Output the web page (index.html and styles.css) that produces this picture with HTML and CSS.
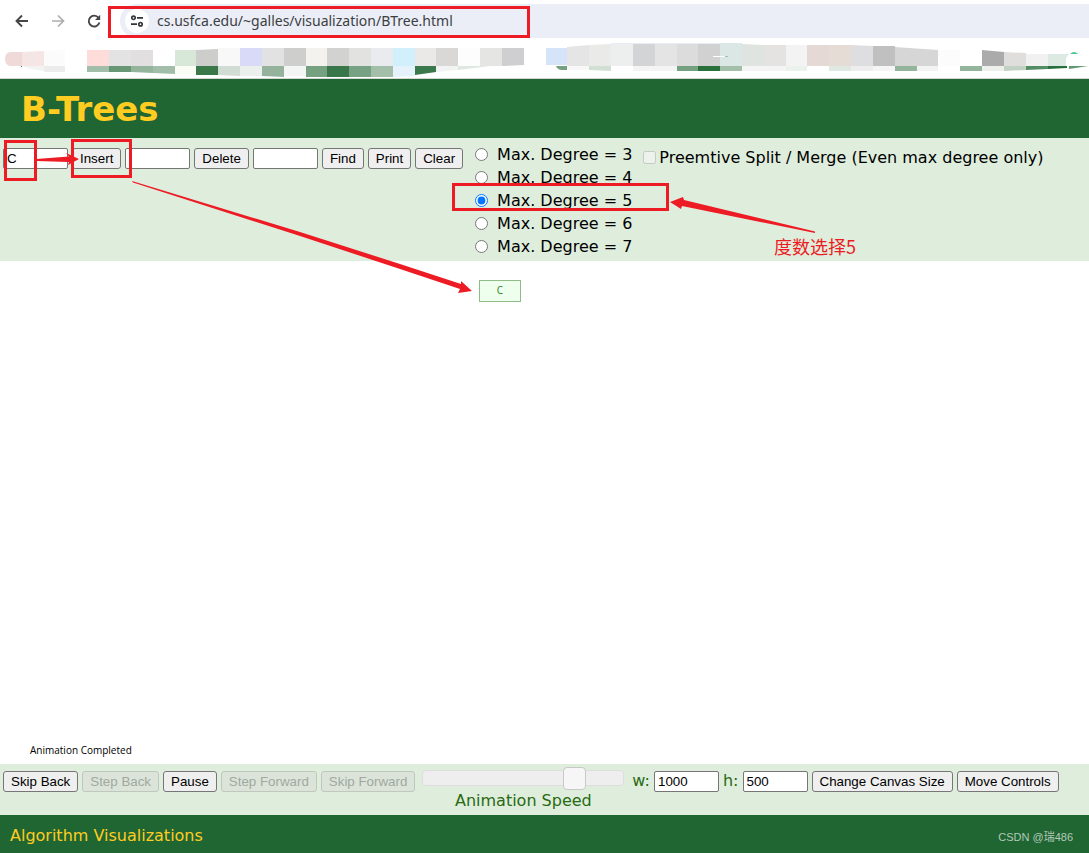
FILE: index.html
```html
<!DOCTYPE html>
<html lang="en">
<head>
<meta charset="utf-8">
<title>B-Tree Visualization</title>
<link rel="stylesheet" href="styles.css">
</head>
<body>
<div class="toolbar">
  <button class="nav-button" type="button" aria-label="Back"><svg width="16" height="16" viewBox="0 0 16 16"><path d="M14 8H3M8 2.500L2.500 8L8 13.500" fill="none" stroke="#444648" stroke-width="1.900"/></svg></button>
  <button class="nav-button" type="button" aria-label="Forward" disabled><svg width="16" height="16" viewBox="0 0 16 16"><path d="M2 8H13M8 2.500L13.500 8L8 13.500" fill="none" stroke="#adadad" stroke-width="1.700"/></svg></button>
  <button class="nav-button" type="button" aria-label="Reload"><svg width="16" height="16" viewBox="0 0 16 16"><path d="M12.500 4.800A5.400 5.400 0 1 0 13.400 9.500" fill="none" stroke="#444648" stroke-width="1.900"/><path d="M14.200 1.800V7H9z" fill="#444648"/></svg></button>
  <div class="address">
    <span class="site-info"><svg width="14" height="14" viewBox="0 0 14 14" fill="none" stroke="#333537" stroke-width="1.700"><circle cx="3.500" cy="3.800" r="1.700"/><path d="M7 3.800H13M1 10.200H7"/><circle cx="10.500" cy="10.200" r="1.700"/></svg></span>
    <input class="url" type="text" aria-label="Address" value="cs.usfca.edu/~galles/visualization/BTree.html">
  </div>
</div>
<div class="bookmarks">
  <svg class="mosaic" width="1089" height="40" viewBox="0 38 1089 40" aria-hidden="true">
    <path d="M22 52H11Q5 52 5 59T11 66H22z" fill="#f0d9d9"/>
    <path d="M22 52L44 51V66H22z" fill="#f5e5e5"/>
    <path d="M44 51L65 50V66H44z" fill="#fbfbfb"/>
    <path d="M22 66H44V71L30 69z" fill="#f3f3f3"/><path d="M44 66H65V72H44z" fill="#ececec"/>
    <path d="M21 66h1v1h-1z" fill="#4e8560"/>
    <path d="M87 50h22v16H87z" fill="#fddcda"/><path d="M109 50h22v16h-22z" fill="#e3e3e3"/><path d="M131 50h22v16h-22z" fill="#e1dfe0"/>
    <path d="M175 50h21v16h-21z" fill="#d7e8d8"/><path d="M196 50L218 49V66H196z" fill="#cdcdcc"/>
    <path d="M218 48h22v18h-22z" fill="#f8f8f8"/><path d="M240 48h22v18h-22z" fill="#d9daf7"/><path d="M262 48h22v18h-22z" fill="#e2e2e2"/><path d="M284 48h22v18h-22z" fill="#cececd"/><path d="M306 48h21v18h-21z" fill="#f3f2ef"/><path d="M327 48h22v18h-22z" fill="#d2d2d1"/><path d="M349 48h22v18h-22z" fill="#e2e2e0"/><path d="M371 48h22v18h-22z" fill="#e9ebee"/><path d="M393 48h22v18h-22z" fill="#d2effc"/><path d="M415 48h21v18h-21z" fill="#ebe9e7"/><path d="M436 48h22v18h-22z" fill="#d9d8d7"/><path d="M458 48h22v18h-22z" fill="#fdfdfd"/><path d="M480 48h22v18h-22z" fill="#e5e5e3"/><path d="M502 48h22v17l-22 1z" fill="#cfcfd1"/>
    <path d="M87 66h22v6H87z" fill="#a2beaa"/><path d="M109 66h22v6h-22z" fill="#689775"/><path d="M131 66h22v7l-22-1z" fill="#94b49c"/><path d="M153 66h22v8l-22-1z" fill="#a2beaa"/><path d="M175 66h21v9l-21-1z" fill="#fafcf6"/><path d="M196 66h22v9h-22z" fill="#3a784a"/><path d="M218 66h22v10l-22-1z" fill="#d1ddd4"/><path d="M240 66h22v10h-22z" fill="#ebf0ed"/><path d="M262 66h22v11l-22-1z" fill="#94b29c"/><path d="M284 66h22v10h-22z" fill="#f3f4f4"/><path d="M306 66h21v11h-21z" fill="#75a181"/><path d="M327 66h22v11h-22z" fill="#39774a"/><path d="M349 66h22v11h-22z" fill="#76a182"/><path d="M371 66h22v11h-22z" fill="#a3bfa9"/><path d="M393 66h22v10l-22 1z" fill="#e5f2fb"/><path d="M415 66h21v6l-21 3z" fill="#3b784b"/><path d="M436 66h22v4l-22 2z" fill="#f2f3f3"/><path d="M458 66h32l-32 4z" fill="#dfe8e1"/>
    <path d="M546 48h21v17h-21z" fill="#d5e4f8"/><path d="M567 47l22-2v21h-22z" fill="#e5e5e5"/><path d="M589 45l22-1v22h-22z" fill="#eaeae8"/><path d="M611 43h22v23h-22z" fill="#ecefee"/><path d="M633 43h22v23h-22z" fill="#d3d4d6"/><path d="M655 43h22v23h-22z" fill="#e4e4e4"/><path d="M677 43h21v23h-21z" fill="#dcdcdc"/><path d="M698 43h22v23h-22z" fill="#d1d1d1"/><path d="M720 43h22v23h-22z" fill="#dbe7e5"/><path d="M742 44l22 1v21h-22z" fill="#dfe4e1"/><path d="M764 45h22v21h-22z" fill="#e4e3e1"/><path d="M786 45h21v21h-21z" fill="#f3f3f3"/><path d="M807 45h22v21h-22z" fill="#e4d9d4"/><path d="M829 45h22v21h-22z" fill="#e5dcd6"/><path d="M851 45l22 1v20h-22z" fill="#dedee0"/><path d="M873 46h22v20h-22z" fill="#bfc0bf"/><path d="M895 47l43 3v16h-43z" fill="#d5d6d5"/><path d="M938 50h22v16h-22z" fill="#fcfcfc"/>
    <path d="M982 50l22 2v14h-22z" fill="#ababab"/><path d="M1004 52l22 1v13h-22z" fill="#dfdedd"/><path d="M1026 54h22v12h-22z" fill="#f1f1f1"/><path d="M1048 54h21l-3 4v8h-18z" fill="#dceae3"/>
    <path d="M611 43H720V44H611z" fill="#e8edf5"/><path d="M713 56h12v1h-12z" fill="#fff"/><path d="M725 56h3v1h-3z" fill="#9bc1b4"/>
    <path d="M556 66h11v4h-6q-4-1-5-4z" fill="#75a181"/><path d="M567 66h22v4h-22z" fill="#f8f8f8"/><path d="M589 66h22v5l-22-1z" fill="#d1dfd4"/><path d="M633 66h44v5h-44z" fill="#f4f4f4"/><path d="M677 66h21v5h-21z" fill="#75a181"/><path d="M698 66h22v5h-22z" fill="#296f3b"/><path d="M720 66h22v5h-22z" fill="#a3bfa9"/><path d="M742 66h44v5h-44z" fill="#f4f4f4"/><path d="M786 66h21v5h-21z" fill="#ebf1ed"/><path d="M829 66h22v5h-22z" fill="#dfe8e1"/><path d="M851 66h22v5h-22z" fill="#eee"/><path d="M873 66h22v5h-22z" fill="#f5f5f5"/><path d="M895 66h22v5h-22z" fill="#94b49c"/><path d="M917 66h21v5h-21z" fill="#f3f3f3"/><path d="M960 66h22v5h-22z" fill="#94b49c"/><path d="M982 66h22v5h-22z" fill="#edf0ed"/><path d="M1004 66h22v4l-22 1z" fill="#c1d2c4"/><path d="M1026 66h22v3l-22 1z" fill="#548c64"/><path d="M1048 66h19v2l-19 1z" fill="#28703b"/><path d="M1069 66h19l-19 3z" fill="#64966f"/><path d="M1070 54q4-4 8 0z" fill="#4fc78c"/>
  </svg>
</div>
<header class="title-bar"><h1>B-Trees</h1></header>
<form class="algorithm-controls">
  <div class="operations">
    <input class="field" type="text" aria-label="Value to insert" value="C">
    <button class="button" type="button">Insert</button>
    <input class="field" type="text" aria-label="Value to delete">
    <button class="button" type="button">Delete</button>
    <input class="field" type="text" aria-label="Value to find">
    <button class="button" type="button">Find</button>
    <button class="button" type="button">Print</button>
    <button class="button" type="button">Clear</button>
  </div>
  <div class="degrees">
    <label class="degree"><input type="radio" name="degree">Max. Degree = 3</label>
    <label class="degree"><input type="radio" name="degree">Max. Degree = 4</label>
    <label class="degree"><input type="radio" name="degree" checked>Max. Degree = 5</label>
    <label class="degree"><input type="radio" name="degree">Max. Degree = 6</label>
    <label class="degree"><input type="radio" name="degree">Max. Degree = 7</label>
  </div>
  <label class="preemptive"><input type="checkbox" disabled>Preemtive Split / Merge (Even max degree only)</label>
</form>
<main class="canvas">
  <div class="tree-node">C</div>
  <p class="status">Animation Completed</p>
</main>
<form class="animation-controls">
  <button class="button" type="button">Skip Back</button>
  <button class="button" type="button" disabled>Step Back</button>
  <button class="button" type="button">Pause</button>
  <button class="button" type="button" disabled>Step Forward</button>
  <button class="button" type="button" disabled>Skip Forward</button>
  <div class="speed">
    <input class="slider" id="speed" type="range" min="0" max="100" value="79">
    <label for="speed">Animation Speed</label>
  </div>
  <label class="dimension" for="canvas-width">w:</label>
  <input class="field" id="canvas-width" type="text" value="1000">
  <label class="dimension" for="canvas-height">h:</label>
  <input class="field" id="canvas-height" type="text" value="500">
  <button class="button" type="button">Change Canvas Size</button>
  <button class="button" type="button">Move Controls</button>
</form>
<footer class="footer">
  <a class="home-link" href="#">Algorithm Visualizations</a>
  <span class="watermark">CSDN @瑞486</span>
</footer>
<svg class="annotations" width="1089" height="320" viewBox="0 0 1089 320" aria-hidden="true">
  <g fill="none" stroke="#ed1c24" stroke-width="3">
    <rect x="109.500" y="7.500" width="419" height="29"/>
    <rect x="5.500" y="141.500" width="30" height="38"/>
    <rect x="72.500" y="140.500" width="58" height="36"/>
    <rect x="453.500" y="184.500" width="214" height="25"/>
  </g>
  <g fill="#ed1c24">
    <path d="M36 159L69 156.500L66 153L79 159L68 165L69 162L36 161z"/>
    <path d="M132 181L300 232L400 264L461 284L461 281L472 291L458 293L460 289L400 269L300 236L133 182.500z"/>
    <path d="M815 231.500L684 200L683 197L670 202L681 209L682 206L815 233z"/>
  </g>
</svg>
<div class="note">度数选择5</div>
</body>
</html>
```
FILE: styles.css
```css
* { box-sizing: border-box; }

body {
  margin: 0;
  min-height: 100vh;
  display: flex;
  flex-direction: column;
  position: relative;
  overflow-x: hidden;
  background: #fff;
  color: #000;
  font: 16px/19px Verdana, "DejaVu Sans", sans-serif;
}

.toolbar {
  display: flex;
  align-items: center;
  gap: 20px;
  padding: 4px 0 0 14px;
}

.nav-button {
  display: flex;
  padding: 0;
  border: 0;
  background: none;
}

.nav-button svg { display: block; }

.address {
  flex: 1;
  display: flex;
  align-items: center;
  gap: 8px;
  height: 34px;
  margin-left: -2px;
  padding-left: 5px;
  border-radius: 17px 0 0 17px;
  background: #ebeef7;
}

.site-info {
  display: flex;
  align-items: center;
  justify-content: center;
  width: 24px;
  height: 24px;
  border-radius: 50%;
  background: #fff;
}

.url {
  flex: 1;
  padding: 0;
  border: 0;
  background: none;
  color: #3c3e42;
  font: 14px/20px "Noto Sans", sans-serif;
}

.bookmarks {
  height: 41px;
  overflow: hidden;
  border-bottom: 1px solid #d5d5d5;
}

.mosaic { display: block; }

.title-bar {
  padding: 11px 21px 9px;
  background: #1f6632;
}

.title-bar h1 {
  margin: 0;
  color: #ffcc22;
  font-size: 34px;
  line-height: 39px;
}

.algorithm-controls {
  display: flex;
  align-items: flex-start;
  padding: 5px 3px 3px;
  background: #dfeddd;
}

.operations {
  display: flex;
  gap: 4px;
  padding-top: 5px;
}

.field, .button {
  height: 21px;
  margin: 0;
  border: 1px solid #767676;
  border-radius: 3px;
  color: #000;
  font-family: Arial, "Liberation Sans", sans-serif;
  line-height: 15px;
  white-space: nowrap;
}

.field {
  width: 65px;
  padding: 1px 3px;
  border-radius: 2px;
  background: #fff;
}

.button {
  padding: 1px 7px;
  background: #efefef;
}

.button:disabled {
  border-color: #bfc8be;
  background: #dce4da;
  color: #a0a8a0;
}

.degrees {
  display: flex;
  flex-direction: column;
  padding-left: 12px;
}

.degree, .preemptive {
  display: flex;
  align-items: center;
  white-space: nowrap;
}

.degree {
  gap: 9px;
  height: 23px;
}

.degree input, .preemptive input {
  width: 13px;
  height: 13px;
  margin: 0;
}

.preemptive {
  gap: 3px;
  height: 28px;
  padding-left: 11px;
}

.canvas {
  flex: 1;
  display: flex;
  flex-direction: column;
  justify-content: space-between;
  padding: 19px 30px 8px;
}

.tree-node {
  width: 42px;
  height: 22px;
  margin-left: 449px;
  border: 1px solid #90bd85;
  background: #eeffee;
  color: #2d7d1d;
  font: 10px/18px "Open Sans", sans-serif;
  text-align: center;
}

.status {
  margin: 0;
  font: 10px/12px "Open Sans", sans-serif;
}

.animation-controls {
  display: flex;
  align-items: flex-start;
  gap: 4px;
  height: 51px;
  padding: 7px 3px 0;
  background: #dfeddd;
  color: #276a12;
}

.speed {
  display: flex;
  flex-direction: column;
  align-items: center;
  gap: 1px;
  width: 202px;
  margin: -5px 4px 0 3px;
}

.slider {
  appearance: none;
  width: 100%;
  height: 16px;
  margin: 4px 0;
  border: 1px solid #ddd;
  border-radius: 4px;
  background: #eee;
}

.slider::-webkit-slider-thumb {
  appearance: none;
  width: 23px;
  height: 23px;
  border: 1px solid #c8c8c8;
  border-radius: 4px;
  background: #f6f6f6;
}

.footer {
  display: flex;
  align-items: center;
  justify-content: space-between;
  height: 38px;
  padding: 2px 16px 0 10px;
  background: #1f6632;
}

.home-link {
  color: #ffcc22;
  text-decoration: none;
}

.watermark {
  padding-top: 3px;
  color: #b4c9b9;
  font: 11px/16px "Liberation Sans", "Noto Sans CJK SC", sans-serif;
}

.annotations {
  position: absolute;
  top: 0;
  left: 0;
  pointer-events: none;
}

.note {
  position: absolute;
  top: 235px;
  left: 774px;
  color: #ed1c24;
  font: 18px/22px "Noto Sans CJK SC", sans-serif;
}
```
